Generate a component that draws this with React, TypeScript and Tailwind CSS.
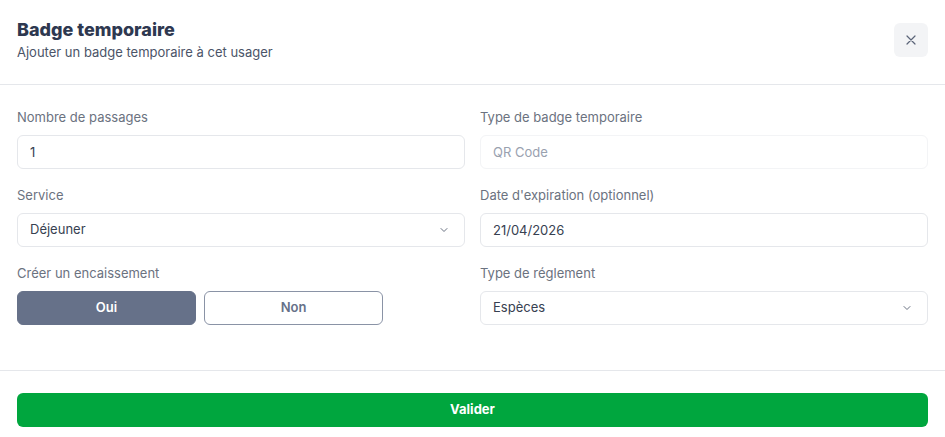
import React, { useState } from 'react';

const Label = ({ children }: { children: React.ReactNode }) => (
  <label className="block text-[13px] leading-5 text-[#6b7280] mb-2 mt-px">{children}</label>
);

const Chevron = () => (
  <svg xmlns="http://www.w3.org/2000/svg" className="h-3 w-3 text-gray-500" fill="none" viewBox="0 0 24 24" stroke="currentColor" strokeWidth="2">
    <path strokeLinecap="round" strokeLinejoin="round" d="M6 9l6 6 6-6" />
  </svg>
);

const SelectBox = ({ value }: { value: string }) => (
  <div className="flex items-center justify-between h-[34px] px-3 rounded-md border border-gray-200 bg-white text-[13px] text-[#374151]">
    <span>{value}</span>
    <span className="mr-[2px]"><Chevron /></span>
  </div>
);

export default function App() {
  const [cash, setCash] = useState(true);

  return (
    <div className="w-[945px] h-[437px] bg-white overflow-hidden" style={{ fontFamily: 'Inter, "Noto Sans", sans-serif' }}>
      {/* Header */}
      <div className="flex items-center justify-between pl-[17px] pr-[17px] pt-[18px] pb-[22px] border-b border-gray-200">
        <div>
          <h2 className="text-[18px] leading-6 font-extrabold text-[#2e3850]">Badge temporaire</h2>
          <p className="text-[13px] leading-5 text-[#4b5468]">Ajouter un badge temporaire à cet usager</p>
        </div>
        <button className="flex h-[34px] w-[34px] items-center justify-center rounded-md bg-gray-100 text-[#5b6478]">
          <svg xmlns="http://www.w3.org/2000/svg" className="h-4 w-4" fill="none" viewBox="0 0 24 24" stroke="currentColor" strokeWidth="1.8">
            <path strokeLinecap="round" strokeLinejoin="round" d="M6 18L18 6M6 6l12 12" />
          </svg>
        </button>
      </div>

      {/* Form */}
      <div className="grid grid-cols-2 gap-x-[15px] gap-y-[15px] px-[17px] pt-[21px] pb-[45px] border-b border-gray-200">
        <div>
          <Label>Nombre de passages</Label>
          <input
            defaultValue="1"
            className="w-full h-[34px] px-3 rounded-md border border-gray-200 text-[13px] text-[#374151] focus:outline-none"
          />
        </div>
        <div>
          <Label>Type de badge temporaire</Label>
          <input
            disabled
            placeholder="QR Code"
            className="w-full h-[34px] px-3 rounded-md border border-gray-100 bg-white text-[13px] placeholder:text-gray-400 focus:outline-none"
          />
        </div>
        <div>
          <Label>Service</Label>
          <SelectBox value="Déjeuner" />
        </div>
        <div>
          <Label>Date d'expiration (optionnel)</Label>
          <input
            defaultValue="21/04/2026"
            className="w-full h-[34px] px-3 rounded-md border border-gray-200 text-[13px] text-[#374151] focus:outline-none"
          />
        </div>
        <div>
          <Label>Créer un encaissement</Label>
          <div className="flex gap-2">
            <button
              onClick={() => setCash(true)}
              className={`w-[179px] h-[34px] rounded-md text-[13px] font-semibold ${cash ? 'bg-[#667189] text-white border border-[#667189]' : 'bg-white text-[#667189] border border-[#8a93a6]'}`}
            >
              Oui
            </button>
            <button
              onClick={() => setCash(false)}
              className={`w-[179px] h-[34px] rounded-md text-[13px] font-semibold ${!cash ? 'bg-[#667189] text-white border border-[#667189]' : 'bg-white text-[#667189] border border-[#8a93a6]'}`}
            >
              Non
            </button>
          </div>
        </div>
        <div>
          <Label>Type de réglement</Label>
          <SelectBox value="Espèces" />
        </div>
      </div>

      {/* Footer */}
      <div className="px-[17px] pt-[22px]">
        <button className="w-full h-[34px] rounded-md bg-[#00a63e] text-white text-[13px] font-bold">Valider</button>
      </div>
    </div>
  );
}
